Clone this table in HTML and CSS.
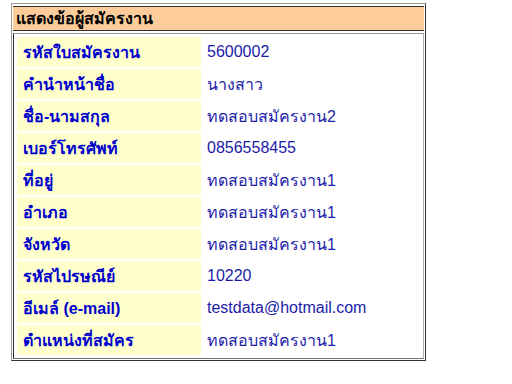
FILE: index.html
```html
<!DOCTYPE html>
<html lang="th">
<head>
<meta charset="utf-8">
<title>แสดงข้อผู้สมัครงาน</title>
<link rel="stylesheet" href="styles.css">
</head>
<body>
<div class="panel">
  <div class="panel-head">แสดงข้อผู้สมัครงาน</div>
  <div class="panel-body">
    <table class="info">
      <tr><th>รหัสใบสมัครงาน</th><td>5600002</td></tr>
      <tr><th>คำนำหน้าชื่อ</th><td>นางสาว</td></tr>
      <tr><th>ชื่อ-นามสกุล</th><td>ทดสอบสมัครงาน2</td></tr>
      <tr><th>เบอร์โทรศัพท์</th><td>0856558455</td></tr>
      <tr><th>ที่อยู่</th><td>ทดสอบสมัครงาน1</td></tr>
      <tr><th>อำเภอ</th><td>ทดสอบสมัครงาน1</td></tr>
      <tr><th>จังหวัด</th><td>ทดสอบสมัครงาน1</td></tr>
      <tr><th>รหัสไปรษณีย์</th><td>10220</td></tr>
      <tr><th>อีเมล์ (e-mail)</th><td>testdata@hotmail.com</td></tr>
      <tr><th>ตำแหน่งที่สมัคร</th><td>ทดสอบสมัครงาน1</td></tr>
    </table>
  </div>
</div>
</body>
</html>
```

FILE: styles.css
```css
body {
  margin: 3px 0 0 11px;
  background: #ffffff;
  font-family: Tahoma, "Liberation Sans", sans-serif;
}

.panel {
  width: 411px;
  border: 1px solid;
  border-color: #9a9a9a #303030 #303030 #9a9a9a;
  padding: 2px 1px 1px 1px;
}

.panel-head {
  background: #fccc9a;
  border-top: 1px solid #303030;
  border-bottom: 1px solid #303030;
  height: 23px;
  line-height: 23px;
  padding-left: 3px;
  font-size: 16px;
  font-weight: bold;
  color: #000000;
}

.panel-body {
  margin-top: 2px;
  border: 1px solid;
  border-color: #9a9a9a #b0b0b0 #707070 #303030;
  padding: 1px 3px 1px 3px;
}

.info {
  width: 100%;
  border-collapse: separate;
  border-spacing: 0 2px;
}

.info th {
  width: 178px;
  height: 30px;
  padding: 0 0 0 6px;
  background: #ffffcc;
  text-align: left;
  font-size: 16px;
  font-weight: bold;
  color: #0000cc;
}

.info td {
  height: 30px;
  padding: 0 0 0 6px;
  font-size: 16px;
  color: #1c1ca8;
}
```
